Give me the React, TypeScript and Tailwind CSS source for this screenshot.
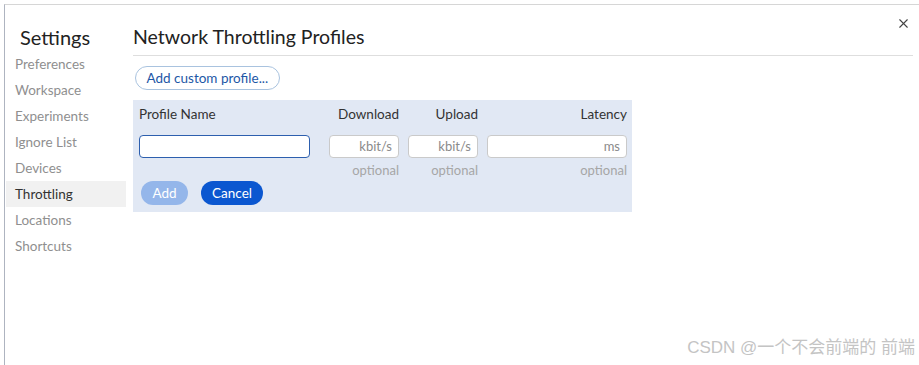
import { X } from 'lucide-react';

const navItems = [
  'Preferences',
  'Workspace',
  'Experiments',
  'Ignore List',
  'Devices',
  'Throttling',
  'Locations',
  'Shortcuts',
];

function Sidebar() {
  return (
    <nav className="w-[121px] shrink-0 pt-[19px]">
      <h1 className="pl-[15px] text-[20px] leading-[26px] text-[#222] h-[27px]">Settings</h1>
      <ul>
        {navItems.map((item) => (
          <li
            key={item}
            className={
              item === 'Throttling'
                ? 'h-[26px] leading-[26px] pl-[9px] ml-[1px] text-[13.5px] text-[#333] bg-[#f1f1f1]'
                : 'h-[26px] leading-[26px] pl-[9px] ml-[1px] text-[13.5px] text-[#8f8f8f]'
            }
          >
            {item}
          </li>
        ))}
      </ul>
    </nav>
  );
}

function NumberField({ unit, width }: { unit: string; width: string }) {
  return (
    <div
      className={`${width} h-[23px] bg-white border border-[#cacaca] rounded-[4px] text-right pr-[6px] text-[13px] leading-[21px] text-[#8a8a8a]`}
    >
      {unit}
    </div>
  );
}

const cols = 'grid grid-cols-[181px_70px_70px_140px] gap-x-[9px]';

function ProfileEditor() {
  return (
    <div className="mt-[10px] w-[499px] bg-[#e1e8f4] px-[6px] pt-[4px] pb-[7px]">
      <div className={`${cols} text-[13.5px] text-[#333] h-[20px] leading-[20px]`}>
        <div>Profile Name</div>
        <div className="text-right">Download</div>
        <div className="text-right">Upload</div>
        <div className="text-right">Latency</div>
      </div>
      <div className={`${cols} mt-[11px]`}>
        <div className="w-[171px] h-[23px] bg-white border border-[#2d5fae] rounded-[4px]" />
        <NumberField unit="kbit/s" width="w-[70px]" />
        <NumberField unit="kbit/s" width="w-[70px]" />
        <NumberField unit="ms" width="w-[140px]" />
      </div>
      <div className={`${cols} mt-[3px] text-[13px] text-[#a6a6a6] leading-[18px]`}>
        <div />
        <div className="text-right">optional</div>
        <div className="text-right">optional</div>
        <div className="text-right">optional</div>
      </div>
      <div className="mt-[2px] flex items-center gap-[13px] pl-[2px]">
        <button className="h-[24px] w-[47px] rounded-full bg-[#94b6ea] text-white text-[13.5px] leading-[24px]">
          Add
        </button>
        <button className="h-[24px] w-[62px] rounded-full bg-[#0b57d0] text-white text-[13.5px] leading-[24px]">
          Cancel
        </button>
      </div>
    </div>
  );
}

export default function App() {
  return (
    <div
      className="relative w-[919px] h-[365px] overflow-hidden bg-white"
      style={{ fontFamily: 'Lato, "Noto Sans", "Noto Sans CJK SC", sans-serif' }}
    >
      <div className="mt-[4px] ml-[4px] h-[361px] border-t border-l border-[#d6d6d6] border-l-[#aeb4c0] flex">
        <Sidebar />
        <main className="flex-1 pl-[7px] pr-[6px] pt-[19px]">
          <div className="flex items-start justify-between">
            <h2 className="text-[19.5px] leading-[26px] text-[#222] pb-[5px]">Network Throttling Profiles</h2>
            <button className="mt-[-8px] mr-[2px] text-[#444]">
              <X size={15} strokeWidth={1.8} />
            </button>
          </div>
          <div className="border-t border-[#dedede]" />
          <button className="mt-[10px] ml-[2px] h-[24px] px-[10.5px] rounded-full border border-[#a9c3df] text-[13.5px] text-[#1d57a6] leading-[22px]">
            Add custom profile...
          </button>
          <ProfileEditor />
        </main>
      </div>
      <div
        className="absolute right-[4px] bottom-[5px] text-[17px] text-[#c4c4c4]"
        style={{ fontFamily: 'Arial, "Liberation Sans", "Noto Sans CJK SC", sans-serif' }}
      >
        CSDN @一个不会前端的 前端
      </div>
    </div>
  );
}
